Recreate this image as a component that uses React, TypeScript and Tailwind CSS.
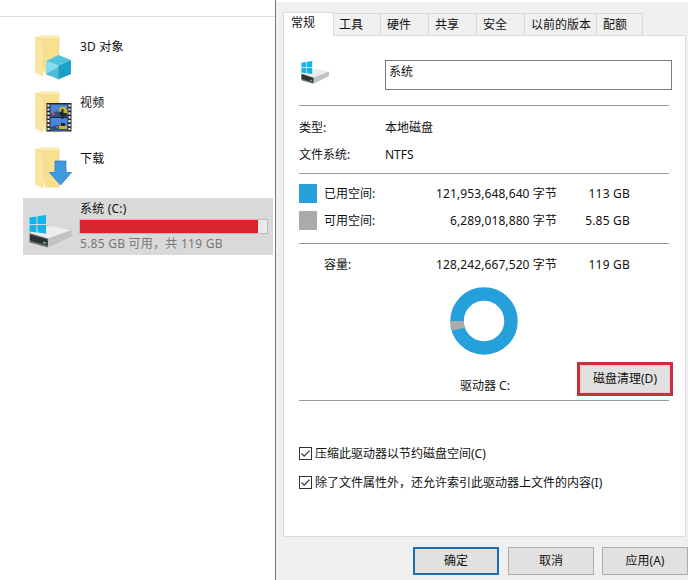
import type { ReactNode } from "react";

const folders = [
  { name: "3D 对象", kind: "cube" },
  { name: "视频", kind: "film" },
  { name: "下载", kind: "arrow" },
];

const tabs = [
  { label: "工具", width: "w-[47px] pl-[5px]" },
  { label: "硬件", width: "w-[48px] pl-[6px]" },
  { label: "共享", width: "w-[48px] pl-[6px]" },
  { label: "安全", width: "w-[48px] pl-[6px]" },
  { label: "以前的版本", width: "w-[72px] pl-[6px]" },
  { label: "配额", width: "w-[46px] pl-[6px]" },
];

const FolderIcon = ({ kind }: { kind: string }) => {
  return (
    <svg width="45" height="48" viewBox="0 0 45 48">
      <path d="M8 2.500h18.500v40H12z" fill="#f9e08f" />
      <path d="M8 2.500h18.500v2.500H8z" fill="#fcedbd" />
      <path d="M2 4l6-1 3 6.500V36l-1.500 7.500L2 39.500z" fill="#fae5a2" />
      <path d="M2 4l6.500 3.500 2.500 4v26l-1.500 5" fill="none" stroke="#f0d37c" strokeWidth="0.700" />
      {kind === "cube" && (
        <g>
          <path d="M10.500 37l-.500 6.500 3.500-1z" fill="#fff" />
          <path d="M25.500 22L38 27l-12.500 5.500L13 28z" fill="#52c3dc" />
          <path d="M13 28l12.500 4.500V46L13 41z" fill="#86dcec" />
          <path d="M38 27l-12.500 5.500V46L38 41z" fill="#1ba3c9" />
          <path d="M13 41l12.500-7L38 41l-12.500 5.500z" fill="#129ac2" opacity="0.500" />
        </g>
      )}
      {kind === "film" && (
        <g>
          <path d="M13.500 14h25v28.500h-25z" fill="#23262e" />
          <path d="M17.500 15.500h17v12.500h-17zM17.500 29h17v12.500h-17z" fill="#4a86d8" />
          <path d="M17.500 25l6-3 4 2 7 1v3h-17zM17.500 38l6-2 11 2v3.500h-17z" fill="#2d5088" />
          <path d="M27 18h6v3h1.500v4H29v-3h-3zM26 37h8v3h-8z" fill="#c9b22c" />
          <path d="M28.500 20h2v4h3v3h-3v3h-2v-4h-2v-3h2zM28 34h4v3h-4z" fill="#22272a" />
          <path d="M19 24h3v2h-3zM23 37h2v2h-2z" fill="#d24a3d" />
          <path
            d="M15.500 15.500v26M36.500 15.500v26"
            stroke="#e8e8e8"
            strokeWidth="2.200"
            strokeDasharray="2.200 1.700"
          />
        </g>
      )}
      {kind === "arrow" && (
        <path
          d="M22 16h11v11.500h5.500L27.500 40 16.500 27.500H22z"
          fill="#3f9be0"
          stroke="#2b80c2"
          strokeWidth="0.800"
        />
      )}
    </svg>
  );
};

const DriveIcon = ({ width, height }: { width: number; height: number }) => {
  return (
    <svg width={width} height={height} viewBox="0 0 44 33" preserveAspectRatio="none">
      <path d="M1 18l20-7 21.500 4.500L19 24z" fill="#ededed" />
      <path d="M19 23.500l23.500-8.500v6.500L19 32.500z" fill="#c2c2c2" />
      <path d="M0.500 18L19 23.500v9L0.500 27.500z" fill="#6d7072" />
      <path d="M1 19.500l17.500 5v6L1 25.500z" fill="#2c302f" />
      <path d="M14 26.500l3 .800v1.700l-3-.800z" fill="#59c974" />
      <path
        d="M0.500 2.500l7-1v7.500h-7zM8.500 1.300L17 0v9H8.500zM0.500 10h7v7.500l-7-1zM8.500 10H17v8.700l-8.500-1.200z"
        fill="#12b5ea"
      />
    </svg>
  );
};

const Divider = () => <div className="h-px w-[370px] bg-[#999]" />;

const SpaceRow = ({
  label,
  bytes,
  size,
  color,
}: {
  label: string;
  bytes: string;
  size: string;
  color: string;
}) => {
  return (
    <div className="flex h-[27px] items-center">
      <div className={`mr-[7px] h-[19px] w-[18px] ${color}`} />
      <span className="w-[92px]">{label}</span>
      <span className="w-[141px] text-right tracking-[0.1px]">{bytes}</span>
      <span className="w-[73px] text-right tracking-[0.2px]">{size}</span>
    </div>
  );
};

const CheckRow = ({ children }: { children: ReactNode }) => {
  return (
    <div className="flex h-[29px] items-center">
      <svg width="13" height="13" viewBox="0 0 13 13" className="mr-[3px] shrink-0">
        <rect x="0.500" y="0.500" width="12" height="12" fill="#fff" stroke="#333" />
        <path d="M2.500 6.500l2.700 2.700 5.300-5.500" fill="none" stroke="#333" strokeWidth="1.200" />
      </svg>
      <span>{children}</span>
    </div>
  );
};

const Explorer = () => {
  return (
    <div className="w-[275px] shrink-0">
      <div className="h-[17px] border-b border-[#dcdcdc]" />
      <div className="pt-[16px]">
        {folders.map((folder) => (
          <div key={folder.name} className="flex h-14 pl-[33px]">
            <FolderIcon kind={folder.kind} />
            <span className="ml-[2px] pt-[5px] tracking-[0.2px]">{folder.name}</span>
          </div>
        ))}
      </div>
      <div className="-mt-[3px] ml-[23px] flex h-[57px] w-[250px] bg-[#d9d9d9] pl-[6px]">
        <div className="w-[50px] pt-[17px]">
          <DriveIcon width={44} height={33} />
        </div>
        <div>
          <div className="h-[21px] pt-[2px] pl-px tracking-[0.2px]">系统 (C:)</div>
          <div className="h-[15px] w-[189px] border border-[#bcbcbc] bg-[#e9e9e9]">
            <div className="h-full w-[178px] bg-[#d9262c]" />
          </div>
          <div className="pt-px pl-px tracking-[0.25px] text-[#777]">5.85 GB 可用，共 119 GB</div>
        </div>
      </div>
    </div>
  );
};

const App = () => {
  return (
    <div className="flex h-[580px] w-[688px] overflow-hidden bg-white font-['Noto_Sans','Noto_Sans_CJK_SC',sans-serif] text-[12px] leading-[18px] whitespace-nowrap text-[#111]">
      <Explorer />
      <div className="w-[413px] shrink-0 border-l border-[#777] bg-[#f0f0f0]">
        <div className="h-[2px] bg-white" />
        <div className="flex h-[33px] items-end pl-[7px]">
          <div className="relative z-10 -mb-px h-[24px] w-[51px] border border-b-0 border-[#dcdcdc] bg-white pt-px pl-[7px]">
            常规
          </div>
          {tabs.map((tab) => (
            <div
              key={tab.label}
              className={`${tab.width} h-[22px] border-t border-r border-[#d9d9d9] pt-[2px]`}
            >
              {tab.label}
            </div>
          ))}
        </div>
        <div className="ml-[7px] h-[502px] w-[403px] border border-[#dcdcdc] bg-white pl-[15px]">
          <div className="flex h-[69px] pt-[24px]">
            <div className="w-[86px] pt-px pl-[2px]">
              <DriveIcon width={29} height={23} />
            </div>
            <div className="h-[30px] w-[287px] border border-[#7a7a7a] pt-[2px] pl-[3px]">系统</div>
          </div>
          <Divider />
          <div className="h-[67px] pt-[8px]">
            <div className="flex h-[27px] items-center">
              <span className="w-[86px]">类型:</span>
              <span>本地磁盘</span>
            </div>
            <div className="flex h-[27px] items-center">
              <span className="w-[86px]">文件系统:</span>
              <span>NTFS</span>
            </div>
          </div>
          <Divider />
          <div className="h-[69px] pt-[6px]">
            <SpaceRow
              label="已用空间:"
              bytes="121,953,648,640 字节"
              size="113 GB"
              color="bg-[#26a0da]"
            />
            <SpaceRow
              label="可用空间:"
              bytes="6,289,018,880 字节"
              size="5.85 GB"
              color="bg-[#ababab]"
            />
          </div>
          <Divider />
          <div className="h-[43px] pt-[7px]">
            <SpaceRow
              label="容量:"
              bytes="128,242,667,520 字节"
              size="119 GB"
              color="bg-transparent"
            />
          </div>
          <div className="flex h-[113px]">
            <div className="w-[278px] pl-[151px]">
              <svg width="68" height="68" viewBox="0 0 68 68">
                <circle cx="34" cy="34" r="27" fill="none" stroke="#26a0da" strokeWidth="13.500" />
                <path d="M.300 34h13.500q0 3 .900 6.800L2.500 43.500Q.300 39 .300 34z" fill="#ababab" />
              </svg>
              <div className="mt-[22px] pl-[10px]">驱动器 C:</div>
            </div>
            <button className="mt-[75px] h-[34px] w-[96px] border-[3px] border-[#c9303e] bg-[#e1e1e1] shadow-[inset_0_0_0_1px_#f3c9cc]">
              磁盘清理(D)
            </button>
          </div>
          <Divider />
          <div className="pt-[38px]">
            <CheckRow>压缩此驱动器以节约磁盘空间(C)</CheckRow>
            <CheckRow>除了文件属性外，还允许索引此驱动器上文件的内容(I)</CheckRow>
          </div>
        </div>
        <div className="flex pt-[10px] pl-[137px]">
          <button className="h-[28px] w-[86px] border-2 border-[#1f6faf] bg-[#e1e1e1]">确定</button>
          <button className="ml-[9px] h-[28px] w-[86px] border border-[#adadad] bg-[#e1e1e1]">
            取消
          </button>
          <button className="ml-[8px] h-[28px] w-[86px] shrink-0 border border-[#adadad] bg-[#e1e1e1]">
            应用(A)
          </button>
        </div>
      </div>
    </div>
  );
};

export default App;
